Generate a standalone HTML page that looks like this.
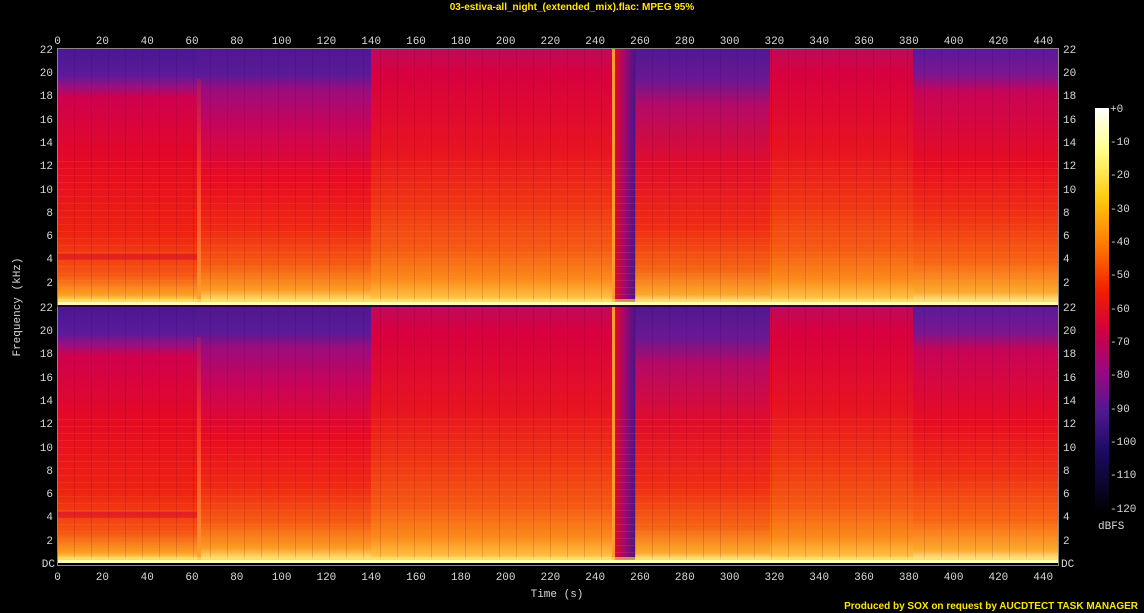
<!DOCTYPE html>
<html><head><meta charset="utf-8"><style>
html,body{margin:0;padding:0;background:#000;width:1144px;height:613px;overflow:hidden}
svg{display:block}
text{font-family:"Liberation Mono","DejaVu Sans Mono",monospace;font-size:11px;fill:#d8d8d8}
.y{font-family:"Liberation Sans",sans-serif;font-weight:bold;font-size:10px;fill:#ffe600}
</style></head><body>
<svg width="1144" height="613" viewBox="0 0 1144 613">
<defs>
<linearGradient id="gA" x1="0" y1="0" x2="0" y2="1">
<stop offset="0" stop-color="#4a1890"/><stop offset="0.1" stop-color="#5a1a9a"/><stop offset="0.15" stop-color="#9a1080"/>
<stop offset="0.19" stop-color="#d0004e"/><stop offset="0.45" stop-color="#e60a22"/><stop offset="0.72" stop-color="#ee2212"/>
<stop offset="0.88" stop-color="#f65414"/><stop offset="0.96" stop-color="#fca024"/><stop offset="0.99" stop-color="#ffe870"/><stop offset="1" stop-color="#ffffc0"/>
</linearGradient>
<linearGradient id="gC" x1="0" y1="0" x2="0" y2="1">
<stop offset="0" stop-color="#501890"/><stop offset="0.1" stop-color="#5a1a98"/><stop offset="0.16" stop-color="#9c0c7c"/>
<stop offset="0.3" stop-color="#c8045a"/><stop offset="0.5" stop-color="#e80a24"/><stop offset="0.7" stop-color="#f02814"/><stop offset="0.84" stop-color="#f65a14"/>
<stop offset="0.94" stop-color="#fc9a22"/><stop offset="0.99" stop-color="#ffec80"/><stop offset="1" stop-color="#ffffc0"/>
</linearGradient>
<linearGradient id="gB" x1="0" y1="0" x2="0" y2="1">
<stop offset="0" stop-color="#c00a5a"/><stop offset="0.1" stop-color="#d8003e"/><stop offset="0.4" stop-color="#e81420"/>
<stop offset="0.6" stop-color="#f03414"/><stop offset="0.78" stop-color="#f65a14"/><stop offset="0.9" stop-color="#fc8a1a"/>
<stop offset="0.97" stop-color="#ffc040"/><stop offset="1" stop-color="#ffffb0"/>
</linearGradient>
<linearGradient id="gD" x1="0" y1="0" x2="1" y2="0">
<stop offset="0" stop-color="#e00828"/><stop offset="0.5" stop-color="#a00870"/><stop offset="1" stop-color="#4a1488"/>
</linearGradient>
<linearGradient id="gE" x1="0" y1="0" x2="0" y2="1">
<stop offset="0" stop-color="#501890"/><stop offset="0.12" stop-color="#6a1894"/><stop offset="0.22" stop-color="#b40a66"/>
<stop offset="0.45" stop-color="#e00c2c"/><stop offset="0.7" stop-color="#f02c14"/><stop offset="0.86" stop-color="#f66414"/>
<stop offset="0.96" stop-color="#fcaa2c"/><stop offset="1" stop-color="#ffffc0"/>
</linearGradient>
<linearGradient id="gF" x1="0" y1="0" x2="0" y2="1">
<stop offset="0" stop-color="#5a1a9a"/><stop offset="0.1" stop-color="#7c1690"/><stop offset="0.17" stop-color="#c80456"/>
<stop offset="0.45" stop-color="#e80c22"/><stop offset="0.65" stop-color="#f03014"/><stop offset="0.83" stop-color="#f86414"/>
<stop offset="0.95" stop-color="#fcaa2c"/><stop offset="1" stop-color="#ffffc0"/>
</linearGradient>
<linearGradient id="streak" x1="0" y1="0" x2="0" y2="1">
<stop offset="0" stop-color="#ff3010" stop-opacity="0.2"/><stop offset="0.5" stop-color="#ff6020" stop-opacity="0.7"/><stop offset="1" stop-color="#ffa030" stop-opacity="0.9"/>
</linearGradient>
<linearGradient id="cb" x1="0" y1="0" x2="0" y2="1">
<stop offset="0" stop-color="#ffffff"/><stop offset="0.1" stop-color="#ffff90"/><stop offset="0.22" stop-color="#ffcc10"/>
<stop offset="0.35" stop-color="#ff7000"/><stop offset="0.45" stop-color="#f02000"/><stop offset="0.55" stop-color="#d00040"/>
<stop offset="0.65" stop-color="#9a0880"/><stop offset="0.75" stop-color="#501890"/><stop offset="0.85" stop-color="#1a0a60"/><stop offset="1" stop-color="#000000"/>
</linearGradient>
<pattern id="vl" x="0" y="0" width="17" height="10" patternUnits="userSpaceOnUse">
<rect x="0" y="0" width="1" height="10" fill="#300040" opacity="0.15"/>
</pattern>
<pattern id="hl" x="0" y="0" width="10" height="7" patternUnits="userSpaceOnUse">
<rect x="0" y="0" width="10" height="1" fill="#ffa040" opacity="0.12"/>
</pattern>
<g id="ch">
<rect x="0" y="0" width="140" height="256" fill="url(#gA)"/>
<rect x="140" y="0" width="174" height="256" fill="url(#gC)"/>
<rect x="314" y="0" width="242" height="256" fill="url(#gB)"/>
<rect x="558" y="0" width="20" height="256" fill="url(#gD)"/>
<rect x="555" y="0" width="3" height="256" fill="#ff9a30"/>
<rect x="578" y="0" width="135" height="256" fill="url(#gE)"/>
<rect x="713" y="0" width="143" height="256" fill="url(#gB)"/>
<rect x="856" y="0" width="145" height="256" fill="url(#gF)"/>
<rect x="0" y="0" width="556" height="256" fill="url(#vl)"/>
<rect x="578" y="0" width="423" height="256" fill="url(#vl)"/>
<rect x="0" y="110" width="1001" height="146" fill="url(#hl)"/>
<rect x="140" y="30" width="4" height="226" fill="url(#streak)"/>
<rect x="0" y="205" width="140" height="6" fill="#d00030" opacity="0.45"/>
<rect x="0" y="250" width="1001" height="6" fill="#ffe060" opacity="0.6"/>
<rect x="0" y="253" width="1001" height="3" fill="#fffcb0"/>
</g>
</defs>
<text class="y" x="572" y="10" text-anchor="middle">03-estiva-all_night_(extended_mix).flac: MPEG 95%</text>
<use href="#ch" x="57" y="49"/>
<use href="#ch" x="57" y="307"/>
<rect x="57.5" y="48.5" width="1001" height="517" fill="none" stroke="#888" stroke-width="1"/>
<line x1="57" y1="306" x2="1058" y2="306" stroke="#600060"/>
<g text-anchor="middle">
<text x="57.6" y="44">0</text><text x="102.4" y="44">20</text><text x="147.2" y="44">40</text><text x="192" y="44">60</text><text x="236.8" y="44">80</text><text x="281.6" y="44">100</text><text x="326.4" y="44">120</text><text x="371.2" y="44">140</text><text x="416" y="44">160</text><text x="460.8" y="44">180</text><text x="505.6" y="44">200</text><text x="550.4" y="44">220</text><text x="595.2" y="44">240</text><text x="640" y="44">260</text><text x="684.8" y="44">280</text><text x="729.6" y="44">300</text><text x="774.4" y="44">320</text><text x="819.2" y="44">340</text><text x="864" y="44">360</text><text x="908.8" y="44">380</text><text x="953.6" y="44">400</text><text x="998.4" y="44">420</text><text x="1043.2" y="44">440</text>
<text x="57.6" y="580">0</text><text x="102.4" y="580">20</text><text x="147.2" y="580">40</text><text x="192" y="580">60</text><text x="236.8" y="580">80</text><text x="281.6" y="580">100</text><text x="326.4" y="580">120</text><text x="371.2" y="580">140</text><text x="416" y="580">160</text><text x="460.8" y="580">180</text><text x="505.6" y="580">200</text><text x="550.4" y="580">220</text><text x="595.2" y="580">240</text><text x="640" y="580">260</text><text x="684.8" y="580">280</text><text x="729.6" y="580">300</text><text x="774.4" y="580">320</text><text x="819.2" y="580">340</text><text x="864" y="580">360</text><text x="908.8" y="580">380</text><text x="953.6" y="580">400</text><text x="998.4" y="580">420</text><text x="1043.2" y="580">440</text>
<text x="557" y="597">Time (s)</text>
</g>
<g text-anchor="end">
<text x="53" y="53">22</text><text x="53" y="76">20</text><text x="53" y="99">18</text><text x="53" y="123">16</text><text x="53" y="146">14</text><text x="53" y="169">12</text><text x="53" y="193">10</text><text x="53" y="216">8</text><text x="53" y="239">6</text><text x="53" y="262">4</text><text x="53" y="286">2</text>
<text x="53" y="311">22</text><text x="53" y="334">20</text><text x="53" y="357">18</text><text x="53" y="381">16</text><text x="53" y="404">14</text><text x="53" y="427">12</text><text x="53" y="451">10</text><text x="53" y="474">8</text><text x="53" y="497">6</text><text x="53" y="520">4</text><text x="53" y="544">2</text><text x="55" y="567">DC</text>
</g>
<g text-anchor="start">
<text x="1063" y="53">22</text><text x="1063" y="76">20</text><text x="1063" y="99">18</text><text x="1063" y="123">16</text><text x="1063" y="146">14</text><text x="1063" y="169">12</text><text x="1063" y="193">10</text><text x="1063" y="216">8</text><text x="1063" y="239">6</text><text x="1063" y="262">4</text><text x="1063" y="286">2</text>
<text x="1063" y="311">22</text><text x="1063" y="334">20</text><text x="1063" y="357">18</text><text x="1063" y="381">16</text><text x="1063" y="404">14</text><text x="1063" y="427">12</text><text x="1063" y="451">10</text><text x="1063" y="474">8</text><text x="1063" y="497">6</text><text x="1063" y="520">4</text><text x="1063" y="544">2</text><text x="1061" y="567">DC</text>
</g>
<text transform="translate(20,307) rotate(-90)" text-anchor="middle">Frequency (kHz)</text>
<rect x="1095" y="108" width="14" height="405" fill="url(#cb)"/>
<g text-anchor="start">
<text x="1110" y="112">+0</text><text x="1110" y="145">-10</text><text x="1110" y="178">-20</text><text x="1110" y="212">-30</text><text x="1110" y="245">-40</text><text x="1110" y="278">-50</text><text x="1110" y="312">-60</text><text x="1110" y="345">-70</text><text x="1110" y="378">-80</text><text x="1110" y="412">-90</text><text x="1110" y="445">-100</text><text x="1110" y="478">-110</text><text x="1110" y="512">-120</text>
</g>
<text x="1098" y="529">dBFS</text>
<text class="y" x="1138" y="609" text-anchor="end">Produced by SOX on request by AUCDTECT TASK MANAGER</text>
</svg>
</body></html>
